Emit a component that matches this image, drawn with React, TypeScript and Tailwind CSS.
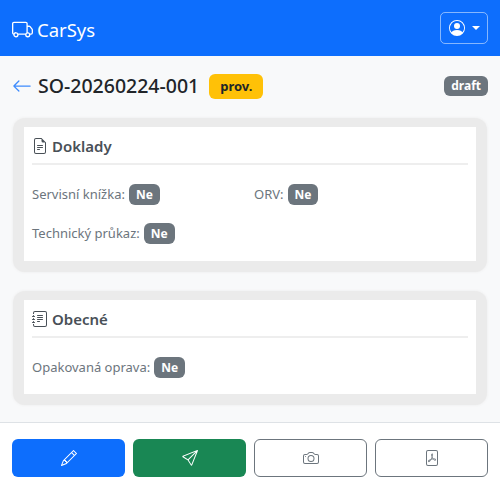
import React from "react";
import {
  BsArrowLeft,
  BsCamera,
  BsFilePdf,
  BsFileEarmarkText,
  BsJournalText,
  BsPencil,
  BsPersonCircle,
  BsSend,
  BsTruck,
} from "react-icons/bs";

function No() {
  return (
    <span className="inline-block rounded-[6px] bg-[#6c757d] px-[7px] py-[4px] text-[12px] leading-[13px] font-bold text-white">
      Ne
    </span>
  );
}

function Field({ label }: { label: string }) {
  return (
    <div className="flex items-center gap-[4px] text-[13px] leading-[21px] text-[#6c757d]">
      <span>{label}:</span>
      <No />
    </div>
  );
}

function Card({
  icon,
  title,
  children,
}: {
  icon: React.ReactNode;
  title: string;
  children: React.ReactNode;
}) {
  return (
    <section className="m-[1px] rounded-[12px] bg-[#ebebeb] px-[11px] pt-[9px] pb-[11px] shadow-[0_0_3px_#ebebeb]">
      <div className="bg-white px-[8px] pt-[7px] pb-[17px]">
        <h2 className="flex items-center gap-[4px] border-b-2 border-[#eeeeee] pb-[5px] text-[15px] leading-[24px] font-semibold text-[#495057]">
          {icon}
          {title}
        </h2>
        {children}
      </div>
    </section>
  );
}

export default function App() {
  return (
    <div className="flex h-[493px] flex-col bg-[#f8f9fa] font-['Noto_Sans','Open_Sans',sans-serif]">
      <header className="flex h-[56px] items-center justify-between bg-[#0d6efd] px-[12px]">
        <div className="flex items-center gap-[4px] pt-[3px] text-[18.5px] text-white">
          <BsTruck className="h-[21px] w-[21px]" />
          CarSys
        </div>
        <button className="flex h-[32px] w-[48px] items-center justify-center gap-[7px] rounded-[5px] border border-white/50 text-white">
          <BsPersonCircle className="h-[16px] w-[16px]" />
          <span className="h-0 w-0 border-x-[4px] border-t-[4px] border-x-transparent border-t-white" />
        </button>
      </header>

      <main className="flex-1 px-[12px] pt-[15px]">
        <div className="mb-[16px] flex h-[30px] items-center">
          <BsArrowLeft className="mr-[6px] h-[20px] w-[20px] text-[#3d8bfd]" />
          <h1 className="text-[19.5px] leading-[30px] font-medium text-[#212529]">
            SO-20260224-001
          </h1>
          <span className="ml-[10px] rounded-[6px] bg-[#ffc107] px-[11px] py-[5px] text-[13px] leading-[15px] font-bold text-[#212529]">
            prov.
          </span>
          <span className="ml-auto rounded-[6px] bg-[#6c757d] px-[7px] py-[3px] text-[12px] leading-[14px] font-bold text-white">
            draft
          </span>
        </div>

        <div className="flex flex-col gap-[17px]">
          <Card icon={<BsFileEarmarkText className="h-[16px] w-[16px]" />} title="Doklady">
            <div className="mt-[19px] grid grid-cols-2 gap-x-[8px] gap-y-[18px]">
              <Field label="Servisní knížka" />
              <Field label="ORV" />
              <Field label="Technický průkaz" />
            </div>
          </Card>
          <Card icon={<BsJournalText className="h-[16px] w-[16px]" />} title="Obecné">
            <div className="mt-[19px] -mb-[1px]">
              <Field label="Opakovaná oprava" />
            </div>
          </Card>
        </div>
      </main>

      <footer className="grid h-[71px] grid-cols-4 gap-[8px] border-t border-[#dee2e6] bg-white px-[12px] pt-[16px]">
        <button className="flex h-[38px] items-center justify-center rounded-[6px] bg-[#0d6efd] text-white">
          <BsPencil className="h-[16px] w-[16px]" />
        </button>
        <button className="flex h-[38px] items-center justify-center rounded-[6px] bg-[#198754] text-white">
          <BsSend className="h-[16px] w-[16px]" />
        </button>
        <button className="flex h-[38px] items-center justify-center rounded-[6px] border border-[#6c757d] text-[#6c757d]">
          <BsCamera className="h-[16px] w-[16px]" />
        </button>
        <button className="flex h-[38px] items-center justify-center rounded-[6px] border border-[#6c757d] text-[#6c757d]">
          <BsFilePdf className="h-[16px] w-[16px]" />
        </button>
      </footer>
    </div>
  );
}
